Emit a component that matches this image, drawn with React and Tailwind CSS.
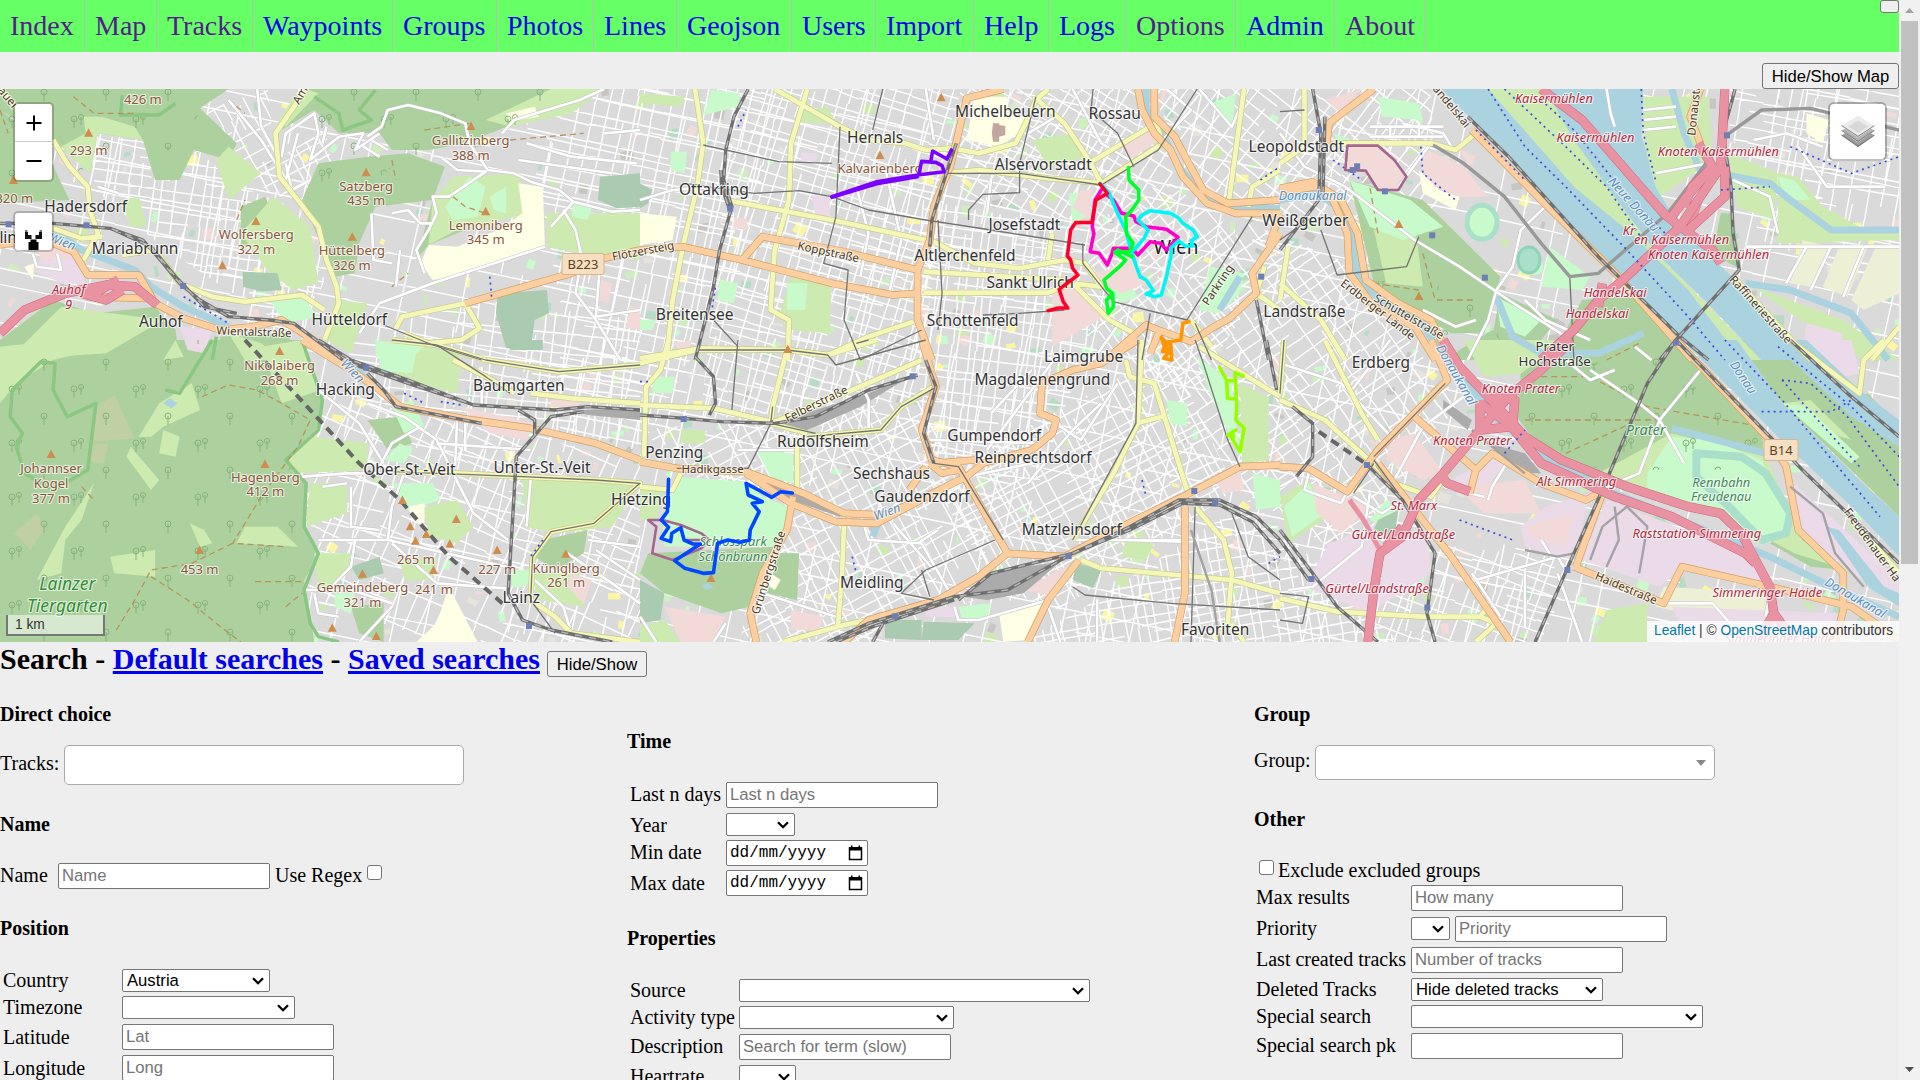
import React from "react";

const NAV = [
  ["Index", 1, "w-[85px]"], ["Map", 1, "w-[72px]"], ["Tracks", 1, "w-[96px]"], ["Waypoints", 0, "w-[140px]"],
  ["Groups", 0, "w-[104px]"], ["Photos", 0, "w-[97px]"], ["Lines", 0, "w-[83px]"], ["Geojson", 0, "w-[115px]"],
  ["Users", 0, "w-[84px]"], ["Import", 0, "w-[98px]"], ["Help", 0, "w-[75px]"], ["Logs", 0, "w-[77px]"],
  ["Options", 1, "w-[110px]"], ["Admin", 0, "w-[99px]"], ["About", 1, "w-[91px]"],
];

/* ---------- Map geometry: six sheets, each drawn in its own 1568 x 1080 grid ---------- */
const SHEETS = [
  { x: 0, y: 0 }, { x: 640, y: 0 }, { x: 1280, y: 0 },
  { x: 0, y: 340 }, { x: 640, y: 340 }, { x: 1280, y: 340 },
];
const KX = 1 / 2.45;
const KY = 1 / 3;

const AREAS = [
  ["#add19e", [
    "M0 267L560 267 490 325 580 430 560 480 475 450 440 540 380 540 350 420 240 400 220 520 150 440 0 330ZM0 330L100 420 170 600 0 610ZM740 267L1420 267 1350 330 1200 400 1140 430 1050 450 960 450 930 400 830 400 770 330 690 390ZM780 490L900 470 1000 460 1090 500 1060 600 920 620 880 730 870 820 820 830 740 600ZM1020 780L1060 600 1120 590 1140 690 1050 735ZM0 1080L0 1020 130 900 230 940 380 920 430 990 440 1080ZM520 1080L540 1010 700 1000 750 1080ZM590 620L650 590 690 700 590 750Z",
    "",
    "M170 540L350 600 540 830 500 1000 420 1000 300 920 230 850ZM400 1080L520 990 640 1080ZM540 880L680 960 600 1080 520 1010ZM1080 640L1110 640 1130 810 1060 760ZM740 900L900 880 980 1030 900 1080 660 1080ZM350 620L420 700 540 830 480 900 340 880Z",
    "M0 0L740 0 790 180 780 260 700 360 750 430 745 560 780 650 745 720 770 906 0 906ZM900 240L980 230 1010 310 950 330ZM1330 600L1440 570 1430 640 1360 690 1310 650ZM860 800L940 790 940 906 880 880Z",
    "M20 640L330 620 270 800 200 820 60 760 0 700ZM340 640L390 640 385 780 310 760Z",
    "M590 100L700 0 970 0 1180 260 1190 400 1110 340 940 400 780 440 640 330 580 230ZM1120 0L1190 0 1517 320 1517 530 1230 190ZM1200 610L1260 540 1380 690 1300 680ZM1380 180L1440 160 1517 260 1517 320Z",
  ]],
  ["#cdebb0", [
    "M205 350L250 350 330 380 350 420 240 400 220 520 150 440 210 400ZM530 480L560 440 640 520 560 600ZM720 290L750 267 780 280 700 380 680 370ZM1190 360L1350 267 1480 267 1400 340 1250 380ZM1340 640L1568 640 1568 780 1430 760 1340 740ZM1060 600L1110 530 1270 520 1300 640 1120 690 1050 735ZM590 700L670 590 760 680 780 850 720 870 660 820ZM300 600L340 590 360 680 320 680ZM20 1080L150 920 400 960 260 1060ZM560 1000L640 1030 690 1080 600 1080ZM820 900L900 910 860 1060 800 1020Z",
    "M370 830L470 840 465 1000 365 990 340 950ZM0 280L110 290 100 320 0 310ZM960 420L1060 400 1100 470 1000 500ZM380 340L460 320 480 370 400 370Z",
    "M510 267L650 267 930 770 1180 1080 1130 1080 1000 870 720 560ZM890 290L1050 290 1060 480 920 600 890 400ZM1100 460L1220 520 1210 660 1120 620ZM1220 520L1270 530 1330 620 1420 680 1517 690 1517 720 1220 730ZM230 690L330 670 350 860 260 850ZM1160 860L1380 960 1517 1080 1430 1080 1250 940Z",
    "M0 20L150 0 230 30 130 60 40 130 0 190ZM470 130L490 210 400 260 370 290 340 290 390 190ZM430 0L450 50 400 60ZM640 20L740 0 785 150 690 190ZM600 560L680 560 730 620 580 610ZM465 550L500 570 520 610 490 620ZM270 650L380 630 380 710 280 700ZM160 560L230 430 200 540 160 600 150 700 90 720ZM770 290L900 310 900 390 720 400 700 360ZM320 320L390 420 370 450 310 350ZM760 430L850 430 850 520 750 560ZM770 640L860 640 850 700 780 760ZM1280 420L1568 430 1500 560 1360 580 1290 560ZM1040 500L1120 480 1160 560 1120 610 1050 590ZM980 660L1070 650 1060 720 990 720ZM1300 700L1420 700 1430 800 1320 780ZM960 0L1130 40 1120 160 960 110ZM400 270L440 290 430 350 390 340Z",
    "M1470 130L1540 170 1540 360 1475 370ZM0 430L60 440 40 540 0 540ZM0 860L60 840 100 906 0 906ZM1190 600L1260 610 1240 660 1180 650ZM100 270L160 270 160 310 100 310Z",
    "M780 400L960 280 1190 350 1280 600 1390 690 1260 640 1080 520 850 450ZM1130 80L1230 190 1300 180 1400 300 1300 260ZM770 906L800 810 900 790 900 906ZM450 0L700 0 590 100 500 110ZM0 470L70 420 130 520 20 610ZM610 0L650 60 590 80Z",
  ]],
  ["#c8facc", [
    "M1405 615L1450 620 1440 660 1400 650ZM1090 620L1150 530 1190 560 1170 650 1110 660ZM1200 590L1240 560 1240 640 1210 630ZM660 900L740 890 780 950 700 970ZM920 1020L1040 1040 1000 1080 920 1070Z",
    "M175 270L245 280 240 320 155 345ZM75 455L115 455 110 520 75 510ZM1050 580L1100 580 1100 650 1060 665ZM360 850L410 850 405 930 360 930ZM195 840L240 850 230 910 190 900ZM1395 800L1480 820 1470 880 1420 940 1370 930ZM1150 870L1200 850 1220 890 1180 910ZM1400 310L1460 280 1450 390ZM0 960L40 960 30 990 0 990Z",
    "M240 290L340 310 350 360 250 350ZM170 540L320 600 400 680 300 720 220 680ZM530 890L640 960 600 1010 540 980ZM130 400L200 430 150 440ZM590 750Q620 720 640 780T590 820ZM660 740L760 830 740 870 640 860ZM1220 530L1260 540 1300 600 1240 600Z",
    "M960 200L1010 180 1040 260 990 280ZM960 430L1060 430 1080 480 1000 510ZM930 20L1020 30 1010 100 930 90ZM1250 690L1300 690 1290 740 1255 740ZM820 760L870 760 860 820 820 800ZM980 310L1010 330 990 370 940 360Z",
    "M90 410L260 425 300 470 365 500 350 580 330 620 60 620 55 530ZM285 330L375 340 375 430 320 410ZM1365 50L1410 90 1450 130 1470 350 1400 170ZM1500 400L1568 420 1568 500 1510 510ZM1290 180L1340 190 1340 260 1300 250ZM30 110L85 110 80 160 30 160ZM780 800L860 790 850 840 790 840Z",
    "M900 400L960 290 1060 300 1180 360 1250 550 1200 610 1100 540 900 460ZM10 500L70 430 110 520 30 590ZM220 540L260 480 290 500 270 570ZM1230 190L1290 200 1420 350 1400 370Z",
  ]],
  ["#aacbaf", [
    "M1470 530L1568 520 1568 620 1510 625 1465 600ZM1220 880L1340 870 1345 940 1310 960 1300 1050 1240 1045 1215 940ZM595 815L680 820 690 870 640 875 595 860Z",
    "M0 550L30 570 20 610 0 625Z", "",
    "M860 680L930 650 940 700 880 720ZM1240 0L1330 0 1330 30 1250 30Z",
    "M0 720L60 760 50 840 0 850ZM600 840L690 840 690 900 600 895ZM695 845L820 850 780 900 690 900ZM1070 670L1130 690 1110 745 1060 720Z",
    "M240 540L290 510 280 600 230 570Z",
  ]],
  ["#ffffe5", [
    "M1050 735L1120 740 1220 690 1280 640 1270 550 1330 560 1335 740 1090 835 1060 840 1030 790ZM1240 340L1310 320 1320 350 1250 365ZM60 800L85 790 80 840Z",
    "M0 640L90 650 80 720 0 735ZM820 290L900 290 900 340 940 350 940 390 880 440 800 420Z",
    "M340 510L390 570 440 590 430 630 350 580ZM1290 340L1345 360 1330 430 1290 400Z",
    "M1100 740L1170 906 1020 906 1070 850ZM1000 500L1040 490 1040 550 1010 540Z",
    "M880 820L1000 780 950 900 890 906ZM320 700L345 720 330 750 305 730Z", "",
  ]],
  ["#eef0d5", ["", "", "M1280 720L1350 740 1300 860 1250 850ZM1370 740L1440 740 1390 890 1330 860ZM1460 740L1517 740 1517 880 1430 930 1400 900Z", "", "", "M940 740L1190 760 1190 870 920 800Z"]],
  ["#c0d0a4", ["", "", "", "M280 165L330 295 225 305 235 200ZM225 310L265 310 255 370 215 365ZM90 520L110 560 75 630 35 580Z", "", ""]],
  ["#ebdbe8", [
    "M100 780L190 770 210 850 160 855 80 810ZM440 980L520 990 500 1060 460 1050Z",
    "M420 585L465 590 465 650 430 650ZM395 458L435 460 430 485 395 485Z",
    "M1290 970L1380 1000 1370 1080 1280 1080Z", "",
    "M700 800L780 800 770 830 700 830Z",
    "M590 560L650 500 760 460 720 660 600 620ZM800 480L1140 640 1200 740 985 680 930 740 740 660ZM1250 420L1517 720 1517 800 1390 690 1280 570ZM420 420L540 340 550 370 500 460 430 450ZM260 620L360 550 370 700 240 800ZM1290 0L1400 0 1420 100 1380 110ZM120 610L230 560 240 640 220 820 60 740ZM960 800L1370 820 1340 906 1000 906Z",
  ]],
  ["#c0a8a0", ["", "M865 370L880 370 880 375 895 378 895 405 880 410 880 425 865 425 862 400Z", "", "", "", ""]],
  ["#f2dad9", [
    "M1470 840L1500 850 1490 910 1465 900ZM1540 920L1568 920 1568 990 1535 985ZM90 740L150 740 190 770 100 780Z",
    "M1010 880L1060 860 1150 940 1010 1040ZM1090 820L1180 880 1240 850 1200 770 1150 810ZM1080 570L1110 570 1100 660 1060 620ZM230 655L262 655 262 690 230 685ZM1180 440L1250 380 1270 420 1200 480ZM80 1030L130 1020 110 1060Z",
    "M170 435L240 437 280 480 310 530 290 570 240 565 210 510 165 510ZM360 450L450 500 510 590 440 590 380 560 345 500ZM110 300L200 267 150 340ZM430 440L480 470 470 500Z",
    "M1130 200L1310 250 1290 300 1200 280ZM1350 180L1420 180 1420 210 1350 200ZM1400 700L1450 720 1430 790 1390 740Z",
    "M60 800L210 830 180 906 100 906ZM1400 410L1470 390 1480 450 1430 460ZM370 810L450 830 440 870 370 870ZM940 750L1040 680 1060 690 1010 770Z",
    "M80 430L220 500 150 580 90 520ZM270 300L330 280 400 400 350 420 260 360ZM600 560L720 520 700 620 620 590ZM430 440L600 420 640 520 500 520ZM150 810L200 800 200 830Z",
  ]],
  ["#aad3df", [
    "", "",
    "M395 267L510 267 720 560 860 700 1000 870 1130 1080 1035 1080 830 820 640 590 560 470ZM650 267L890 267 885 400 920 560 980 680 1090 810 1240 990 1290 1080 1180 1080 1040 900 930 770 820 590 720 420Z",
    "M400 190L415 175 435 190 420 205Z",
    "M150 735L170 730 180 745 160 750Z",
    "M985 0L1120 0 1230 190 1420 420 1517 530 1517 650 1400 500 1220 290ZM1190 0L1290 0 1420 150 1517 240 1517 320 1400 230 1270 80ZM1340 560L1370 570 1480 740 1517 760 1517 800 1440 740Z",
  ]],
  ["#ababab", ["", "", "", "M1400 210L1568 205 1568 240 1440 225Z", "M340 245L560 160 660 110 540 200 400 275ZM790 770L860 695 1030 665 940 760 850 780ZM270 410L400 450 500 515 490 530 370 480Z", "M510 310L600 340 640 400 590 400ZM400 180L470 240 460 270 400 210Z"]],
];

const LINES = {
  water: ["M130 690L200 750 330 810 370 860 450 920 560 980", "M1240 267L1240 330 1280 400 1320 500 1380 590 1450 620 1568 625M1470 830L1420 930", "M0 600L90 580 140 620 180 720 190 830 260 920 350 970 400 1080M960 267L990 400 1030 510 1200 550 1250 600 1350 690 1517 690M1140 850L1250 870 1400 940 1490 1080M530 890L570 1010 640 1060 780 1060 890 1000", "M860 60L900 130", "M570 590L590 530", "M385 0L430 90 520 220 640 350 800 450 1000 550 1200 650 1350 740 1517 830M960 265L1100 310 1190 340"],
  white: [
    "M900 410L935 380 950 330 1000 315 1080 340 1140 370 1150 430 1195 510 1260 520 1300 545 1370 570 1405 605 1500 635 1568 630M1405 605L1350 680M1380 630L1410 690 1425 770 1410 880 1460 960 1520 1080M690 470L700 400 770 340 780 400 760 480 830 410 890 400 870 450 930 400M700 490L715 570 760 540M880 1000L930 910 1060 850 1335 740M1080 470L1120 510 1190 515 1100 590 1060 590 1070 640 1050 690 1020 750 1040 820M730 400L700 540M800 380L790 430M890 440L930 470M910 420L950 450M960 640L1000 630 1030 670 1060 670M910 640L915 780 960 790M980 750L970 860M1290 430L1400 470 1560 490M1230 400L1260 360 1420 300 1480 267M1480 400L1568 390M1270 480L1500 520M240 560L290 580M80 760L90 800 150 810 140 760M630 267L640 380 680 470M560 300L640 420 680 500M1470 790L1460 950 1568 930",
    "M0 600L80 570 190 560M700 267L720 420M1060 267L1130 430 1200 480M1370 267L1450 380 1490 267M1290 267L1350 330 1280 420M530 560L560 700 540 830M600 500L640 720 610 880M860 540L850 640M950 400L1020 350M1180 960L1110 1080M1500 720L1568 760",
    "M0 400L60 500 160 560 330 720 440 800 560 900 700 1010M650 620L590 690 570 800 530 870 510 960 460 1080M300 370L400 400 420 440M370 430L290 560M220 380L400 380M220 410L400 410M270 380L270 410M340 370L340 410M890 330L970 320M890 360L970 350M890 390L970 380M920 520L1050 490M600 900L650 960 760 1020M480 960L430 980 350 930M800 267L810 340 820 380M1110 540L1200 590 1220 700M1160 420L1240 400 1330 440M1270 440L1340 560 1480 560M1340 480L1500 480M1290 740L1240 850M1350 740L1300 870M1430 740L1380 890M1140 740L1517 740",
    "M800 20L940 180M780 150L880 250 940 370M900 190L990 230 1070 300 1110 400 1160 520 1245 600M740 410L850 400 990 400 960 500 950 600 1240 680M960 610L1070 730 1240 745M1120 230L1115 380M1070 310L1300 330M780 600L960 600M1300 420L1290 560M860 440L860 560 930 570M790 440L850 430M820 730L860 680 870 600M750 750L860 750 960 790M880 906L960 800M770 760L780 820 830 830M1310 720L1380 800 1400 880M1390 640L1500 730 1568 790M1460 630L1568 720M1440 600L1568 620M930 380L960 310 1030 260M1180 80L1180 200M1140 240L1140 330",
    "M530 100L560 180 560 270M960 90L860 220M1020 50L850 330M550 560L560 600 690 610 760 760M620 550L720 690M0 830L40 906M300 760L480 830M770 800L780 840 830 840 1000 780M680 610L730 570M1130 190L1060 270 950 430M1170 130L1080 300 1030 260 1020 230M710 300L980 310M1060 600L1330 600M1180 600L1330 605M800 410L1000 360M1000 800L1030 906M1120 780L1120 906M240 330L390 330M210 850L180 906",
    "M0 70L150 130 280 300M270 0L170 160M450 170L350 260 280 420M180 470L250 520 300 480M70 400L60 450 150 490M150 490L165 455M220 460L200 620 80 740 20 750M480 720L680 650 700 690M680 700L740 906M600 700L600 860M640 600L670 660M440 60L330 220M760 90L880 190 930 240 990 370M930 240L1030 90M930 240L880 400 780 450M700 60L760 120 820 90M870 20L910 60M950 790L1060 790 1110 860M1200 760L1190 830M560 360L520 440 510 480M400 440L500 470M470 700L540 830M30 420L0 440",
  ],
  tram: [
    "M940 975L1060 1035 1180 1080",
    "M490 380L480 650 450 790 510 810 500 960 540 1080M110 550L280 580 390 572 470 590 560 630 700 660 860 690 1090 735M155 435L340 485 470 490M745 520L930 520 1130 555 1270 450 1365 267M805 660L805 630 840 583 930 578 930 500M1110 267L1105 330 1170 400 1210 500M1085 730L1085 790 1160 905 1340 960 1500 650M570 390L595 267M690 990L540 1080M840 945L930 940 1040 930M730 660L740 880 730 990M970 290L930 490M1250 940L1230 1080M1360 970L1400 1080M180 960L240 1040",
    "M0 335L60 330M140 825L310 800 340 710M140 825L100 690M0 720L80 650M710 830L720 1080",
    "M960 0L1070 15 1190 60 1370 95 1568 75M1070 15L1190 110 1250 160M960 395L1280 410 1460 420 1568 430 1455 550 1350 575 1305 650 1300 780 1360 880",
    "M240 0L225 210M140 30L360 30 460 45 480 75 700 0M870 600L700 690 640 760 720 780M690 690L710 770M325 240L265 385 90 385M325 200L320 250 430 280M720 145L640 200 590 270 410 290M1220 0L1215 250 1060 600M1360 0L1380 70 1440 300 1470 380M1060 740L1090 765 1300 790 1568 810M720 370L780 380 890 600M560 0L530 10M1360 500L1350 906M1450 520L1490 650 1568 720",
    "M10 0L0 160M0 840L55 850 70 770 0 760M230 360L290 460M405 130L230 350M180 460L230 370",
  ],
  yellow: [
    "M0 270L40 320M130 420L170 500 215 560 220 630 240 700 205 780M750 267L675 400 685 530 780 680 800 780 825 860 830 910 795 1020M130 685L200 715 250 710M300 765L380 750 440 850 520 890 600 905 740 885 795 930M1140 910L985 950 970 985M1140 910L1175 985 1130 1020 1050 1030 990 1000",
    "M135 267L155 430 140 560 105 740 80 900 65 1080M410 267L370 430 365 600 330 750 320 930 365 960 362 1080M330 267L490 380 560 420 650 430 700 450 765 445 830 460 920 430 945 370 970 300 1000 267M965 290L1040 370 1100 480 1130 550 1280 430 1265 370 1100 490M210 600L470 660 720 725 820 790 930 805 1040 780 1090 790 1130 860 1060 850M695 815L1040 840M695 878L1000 878 1060 850 1150 960 1210 1000M1480 267L1440 630M1490 620L1500 560 1568 510M750 520L830 510 1000 535 1130 550M0 1075L150 1045 360 1050 460 1065 560 1010 670 965M1010 700L1000 780M1530 800L1510 880 1568 930M1350 960L1400 1040",
    "M130 430L370 430 430 450 480 400M0 850L100 960 160 1080M1110 830L1200 950 1300 1080M1517 980L1450 1080M0 490L60 440 60 267M20 740L0 900",
    "M960 0L1070 15 1190 60 1370 95 1568 75M1300 160L1400 175 1568 190M960 395L1120 400 1280 410 1460 420 1568 430 1510 490 1455 550 1350 575 1305 650 1300 780 1360 830 1400 880 1568 906M1110 60L1190 110 1260 160",
    "M70 0L50 90 15 140 10 350M0 70L140 30 360 30 460 45 580 0M360 30L325 200 320 250 410 280M320 250L520 150 690 60M720 140L640 200 590 270 410 290M0 195L180 205 320 245M500 550L495 700 485 860 350 906M1190 60L1200 110 1260 130 1290 250 1340 450M1230 0L1220 250 1160 400 1060 600M1360 500L1430 600 1450 700 1440 850M1080 660L1130 685 1450 720 1568 760M385 300L385 440M480 860L560 840M1370 20L1568 170M1215 250L1280 230M780 380L800 410M1450 850L1480 906M100 400L80 450 0 440",
    "M110 0L200 220 240 300M0 180L110 240 200 340 280 430 370 470 415 390M0 775L140 815 350 830 490 830 530 850 480 906M1250 0L1420 160 1430 60 1480 0M1517 700L1390 520M10 0L0 160M490 830L510 800",
  ],
  orange: [
    "M0 735L100 715 180 755 215 825 340 825 380 910 450 955 540 990 620 980 690 960 730 990 840 1080M210 890L360 895M1140 910L1400 820 1480 775 1568 750",
    "M890 267L800 295 780 400 760 500 720 620 710 720 680 810 680 960 715 1080M0 750L105 740 250 780 470 850 620 885 680 880M250 780L300 710 500 755 680 810M1220 267L1230 330 1260 400 1300 450 1330 530 1390 610 1460 640 1568 640M1260 267L1260 350 1310 410 1340 480 1380 570 1440 610 1568 600M1568 700L1500 820 1510 880 1445 955 1400 985 1350 1025 1270 990 1240 975 1160 1060M1270 1000L1250 1060M1568 640L1540 740",
    "M230 267L120 370 115 430M470 390L640 600 830 830 960 1010 1010 1080M0 575L90 560 130 600 165 700 170 820 230 920 330 980 380 1080M0 565L80 545 150 600 190 700 210 840 290 910 370 960 420 1080M1030 267L1005 350 1030 430",
    "M740 0L860 90 930 150 980 200 1130 235 1300 265 1460 310 1568 360",
    "M690 0L725 140 690 270 715 360 780 380 840 510 900 640 830 710 730 780 560 840 500 906M900 640L1040 650 1180 560 1330 470 1470 380 1568 375M0 365L90 385 260 395 400 460 500 520 600 525 700 470 800 410 840 370 960 330 1010 280 1020 240 980 220 985 130 1060 90 1130 70 1220 0M260 400L370 490 480 545 580 550 780 420M375 470L360 570 300 700 270 820 285 906M720 370L820 360M700 380L660 450M710 370L740 400 780 390M1335 500L1335 760 1310 906M1075 660L1000 780 950 906",
    "M370 0L410 120 240 330 165 455 70 385 0 380M240 370L420 650 565 906M320 220L480 390 520 340 640 430 750 480 780 460M480 390L465 460M970 0L1200 300 1240 380 1270 570 1380 700 1380 810 1360 906M720 680L940 790 985 680 1200 740 1400 800 1517 900M790 460L725 680",
  ],
  motor: [
    "M0 1000L60 930 160 880 260 855 330 860 385 915M200 880L260 900 300 870M230 880L290 840", "",
    "M640 267L740 360 940 640 980 680 840 840 780 900 720 990 640 1080M1090 267L1080 500 980 680M1025 430L1060 500 990 600 960 650M1090 500L1090 590 1000 690M1060 500L1010 560 990 620M980 680L1060 750 1080 790M790 850L780 920",
    "", "",
    "M715 0L640 90 560 170 490 270 400 400 340 480 300 590 245 640 230 750 215 906M400 0L440 80 510 170 600 290 690 360 850 440 1000 500 1080 520 1130 580 1200 740 1210 820 1170 906M1210 820L1260 906M560 250L640 370 820 470 960 530 1140 640 1165 670M390 400L410 430 465 455M490 180L490 270 570 260 575 180 520 170M490 190L570 260M300 560L260 620",
  ],
  ramp: ["", "", "M1040 560L1020 640 990 690", "", "", "M170 480L205 540 240 620 260 640"],
  rail: [
    "M0 670L130 670 270 685 350 720 400 790 440 850 490 900 560 950 660 960 720 970 840 1080M280 690L370 740 430 830 500 920 580 940",
    "M265 267L230 350 210 450 205 540 225 620 195 750 180 860 160 960 135 1080M198 510L200 560 220 630M775 430L740 560 715 660 710 740M1510 900L1540 1080",
    "M80 267L100 400 95 600 0 750M110 350L105 600M460 350L560 470 780 770 980 1010 1050 1080M1115 267L1085 400 1105 560 1110 700 1125 810 970 1020 930 1080",
    "M780 0L860 60 1000 120 1160 195 1360 210 1440 200 1568 210M860 70L1000 130 1150 190M900 100L940 150 970 200 1180 250M1430 215L1350 230 1265 350 1245 760 1280 840 1350 870 1500 906M1270 210L1310 240 1310 290",
    "M0 225L110 235 200 245 330 250 430 230 560 150 680 105M780 780L860 700 1060 640 1200 560 1320 480 1420 480 1510 530 1568 600M1060 640L1200 570 1330 490 1420 495 1500 545 1568 640M460 906L560 850 770 770 900 750 1060 640M480 906L570 860 770 780M135 50L180 110 185 190 170 225M570 906L600 840M700 60L725 140 695 280 720 370M1535 0L1560 150",
    "M970 0L900 130 790 450 720 640 625 906M970 0L1280 390 1517 670M30 200L80 250 80 350 40 410M210 370L300 480 380 640 360 820 380 906M0 570L80 700 140 800 240 906M0 600L70 720M1250 0L1390 160 1517 290",
  ],
  siding: ["", "", "", "", "M1350 570L1400 750 1420 906", "M470 270L560 360 600 400M600 630L680 650 720 640M760 660L790 560 850 500 900 560 880 700M820 500L830 600 800 680M1250 440L1330 520 1360 640 1430 740"],
  subway: ["", "", "M375 435L450 490 550 590 640 730 710 830 780 820 950 640 1100 400 1180 330 1300 325 1517 390", "", "", ""],
  tunnel: ["", "", "", "M600 0L730 170 880 370 980 480 1100 650 1240 800", "", "M95 275L215 375"],
  path: [
    "M180 290L230 340 330 340M560 300L600 340M1040 390L1150 370M1110 590L1140 620 1190 640M960 480L970 540M580 660L600 600M1250 420L1430 400M960 860L1000 820M0 330L20 400", "", "M350 760L380 900 480 900M230 850L340 870M240 700L220 560",
    "M495 170L560 135 630 150 690 190 760 240 730 320 640 470 570 610 700 620M570 610L470 670 370 690 330 780 280 880M625 725L740 725M370 710L460 780 540 860 590 906M200 440L230 480M700 800L740 760", "",
    "M600 240L860 240 930 240M640 110L760 110 900 200 1180 260M700 340L860 250M800 60L880 10",
  ],
  green: ["M300 285L295 345 390 345 430 310M770 290L830 340 840 390 910 360 880 330 920 270M520 1080L530 1010", "", "", "M30 150L100 65 135 70 130 150 165 230 235 190 215 390 130 450 60 400 40 320 55 280 25 230ZM520 0L490 60 440 160 405 150M740 0L790 180 780 270 700 360 750 430 745 560 780 640 745 750 760 850 780 890 830 906", "", ""],
  purple: ["", "", "M165 437L240 437 280 480 310 530 290 570 240 570 210 512 160 510Z", "", "M20 540L55 540 100 555 150 580 170 600 150 625 80 660 30 640 40 560ZM110 600L160 600", ""],
  dots: ["M1200 830L1205 900M450 890L560 970", "M240 380L260 330M175 940L185 860M1520 540L1568 500", "M510 267L600 440 700 560 850 750 1000 950 1090 1080M550 267L700 440 800 560 900 740M640 300L720 390 830 560 960 720M885 267L890 400 920 540M480 390L600 540M345 440L350 520 430 600M1080 570L1200 560M1250 440L1400 520 1517 470M130 480L200 540", "M990 160L1040 190M1080 185L1130 195M1330 600L1300 650", "M1230 420L1240 470M520 650L530 700M0 125L20 125M1540 670L1568 650", "M1090 0L1230 180 1380 400 1470 530M1230 120L1300 130 1390 230 1517 440M1180 215L1350 215 1400 180M1220 20L1400 200 1517 350M440 540L570 600M550 340L600 270M1230 120L1420 380"],
};
const LAYERS = [
  ["water", "#aad3df", 7], ["green", "#8ac783", 3.5], ["path", "#b8935a", 1.3, "6 4"],
  ["white", "#c4c2c4", 3.6], ["white", "#ffffff", 2.6],
  ["yellow", "#c9cc8a", 6], ["yellow", "#f4f7b8", 4.6],
  ["orange", "#d3a067", 7.6], ["orange", "#fbcf9f", 6.2],
  ["tram", "#737373", 1.3], ["siding", "#a3a3a3", 2.4], ["subway", "#999999", 3.4], ["tunnel", "#666666", 4, "9 6"],
  ["rail", "#6f6f6f", 3.4], ["rail", "#b8b8b8", 1.4, "7 7"],
  ["ramp", "#e892a2", 5], ["motor", "#cf6880", 9.3], ["motor", "#e892a2", 8.3],
  ["dots", "#3c4be0", 1.7, "2 4"], ["purple", "#a5658c", 2.6],
];

const TRACKS = [
  [1, "#ff00c8", "M1130 570L1115 600 1108 680 1112 700 1103 755 1125 760 1145 795 1155 765 1160 745 1205 745 1220 765 1250 725 1275 730 1290 750 1318 712 1290 688 1240 680 1215 665 1210 648 1180 640 1160 600 1145 585"],
  [1, "#00f5f5", "M1127 550L1150 580 1170 640 1190 690 1205 760 1225 830 1240 840 1258 872 1240 882 1262 890 1277 885 1290 830 1302 760 1300 745 1320 722 1335 738 1355 738 1350 722 1365 710 1355 690 1330 670 1320 655 1300 640 1250 632 1230 645 1220 660 1245 690 1235 715 1210 750"],
  [1, "#ff002b", "M1127 552L1145 580 1117 600 1107 667 1067 668 1055 690 1047 768 1055 780 1060 805 1073 825 1027 868 1037 905 1048 924 1025 924 1000 932"],
  [1, "#00ff2a", "M1197 503L1198 540 1222 570 1222 600 1205 630 1190 650 1192 700 1208 730 1200 755 1163 757 1190 780 1175 800 1137 840 1143 865 1158 880 1160 920 1147 940 1143 900 1158 880M1170 750L1205 770"],
  [1, "#7a00ff", "M470 590L580 545 680 525 745 515 740 497 725 487 690 484 683 524M470 592L580 551 680 530M712 487L717 453 752 477 763 450"],
  [1, "#ff9500", "M1345 965L1330 970 1325 1020 1290 1027 1277 1013 1285 1040 1280 1055 1300 1050 1283 1075 1303 1080 1300 1030 1285 1030 1303 1065"],
  [4, "#95ff00", "M1420 82L1437 120 1440 175 1460 177M1437 122L1460 122M1478 108L1458 98 1462 200 1460 240 1480 265 1470 335 1445 285M1440 285L1460 270M1448 278L1455 290"],
  [4, "#0048ff", "M70 418L67 515 52 540 70 562 52 595 75 605 78 580 100 563 108 600 130 612 148 612 85 662 110 685 155 700 180 698 190 610 215 600 245 607 268 600 270 570 292 515 275 490 300 485 265 465 260 430 323 472 345 455 373 459"],
];

/* labels: [sheet, kind, centre x, baseline y, text, rotation] */
const LABELS = [
  [0, "p", 210, 633, "Hadersdorf"], [0, "p", 331, 759, "Mariabrunn"], [0, "p", 394, 980, "Auhof"], [0, "p", 856, 973, "Hütteldorf"], [0, "p", 20, 726, "lin"],
  [0, "k", 350, 311, "426 m"], [0, "k", 217, 464, "293 m"], [0, "k", 35, 607, "320 m"],
  [0, "k", 1153, 434, "Gallitzinberg"], [0, "k", 1153, 479, "388 m"], [0, "k", 897, 570, "Satzberg"], [0, "k", 897, 614, "435 m"],
  [0, "k", 628, 716, "Wolfersberg"], [0, "k", 628, 760, "322 m"], [0, "k", 862, 764, "Hüttelberg"], [0, "k", 862, 808, "326 m"],
  [0, "k", 1190, 687, "Lemoniberg"], [0, "k", 1190, 731, "345 m"],
  [0, "m", 168, 880, "Auhof"], [0, "m", 168, 925, "9"], [0, "s", 622, 1005, "Wientalstraße", 2], [0, "s", 742, 290, "Am", -60], [0, "s", 15, 300, "auer", 50],
  [0, "w", 150, 735, "Wien", 20], [0, "s", 1577, 762, "Flötzersteig", -11],
  [1, "p", 576, 428, "Hernals"], [1, "k", 588, 516, "Kalvarienberg"], [1, "p", 895, 348, "Michelbeuern"], [1, "p", 1163, 355, "Rossau"],
  [1, "p", 988, 507, "Alservorstadt"], [1, "p", 181, 584, "Ottakring"], [1, "p", 942, 687, "Josefstadt"], [1, "p", 796, 781, "Altlerchenfeld"],
  [1, "p", 956, 862, "Sankt Ulrich"], [1, "p", 134, 957, "Breitensee"], [1, "p", 815, 977, "Schottenfeld"], [1, "p", 1087, 1083, "Laimgrube"],
  [1, "c", 1313, 760, "Wien"], [1, "s", 460, 765, "Koppstraße", 12], [1, "s", 1422, 860, "Parkring", -56],
  [2, "p", 40, 453, "Leopoldstadt"], [2, "p", 62, 675, "Weißgerber"], [2, "p", 60, 948, "Landstraße"], [2, "w", 80, 598, "Donaukanal"],
  [2, "m", 671, 306, "Kaisermühlen"], [2, "m", 773, 425, "Kaisermühlen"], [2, "m", 1074, 467, "Knoten Kaisermühlen"], [2, "m", 855, 702, "Kr"],
  [2, "m", 984, 729, "en Kaisermühlen"], [2, "m", 1050, 775, "Knoten Kaisermühlen"], [2, "m", 821, 888, "Handelskai"], [2, "m", 777, 951, "Handelskai"],
  [2, "w", 860, 620, "Neue Donau", 48], [2, "s", 415, 325, "andelskai", 50], [2, "s", 1022, 330, "Donausta", -84],
  [2, "s", 312, 958, "Schüttelstraße", 30], [2, "s", 235, 936, "Erdberger Lände", 38], [2, "s", 1172, 935, "Raffineriestraße", 48],
  [2, "d", 673, 1050, "Prater"], [2, "d", 673, 1096, "Hochstraße"],
  [3, "p", 846, 162, "Hacking"], [3, "p", 1271, 150, "Baumgarten"], [3, "p", 1003, 404, "Ober-St.-Veit"], [3, "p", 1328, 397, "Unter-St.-Veit"],
  [3, "p", 1277, 786, "Lainz"], [3, "k", 685, 89, "Nikolaiberg"], [3, "k", 685, 133, "268 m"], [3, "k", 125, 398, "Johannser"], [3, "k", 125, 442, "Kogel"], [3, "k", 125, 487, "377 m"],
  [3, "k", 650, 424, "Hagenberg"], [3, "k", 650, 467, "412 m"], [3, "k", 489, 701, "453 m"], [3, "k", 1019, 670, "265 m"], [3, "k", 1218, 699, "227 m"],
  [3, "k", 1387, 698, "Küniglberg"], [3, "k", 1387, 740, "261 m"], [3, "k", 888, 755, "Gemeindeberg"], [3, "k", 1063, 760, "241 m"], [3, "k", 888, 799, "321 m"],
  [3, "f", 165, 747, "Lainzer"], [3, "f", 165, 813, "Tiergarten"], [3, "w", 858, 100, "Wien", 46],
  [4, "p", 3, 494, "Hietzing"], [4, "p", 84, 351, "Penzing"], [4, "p", 448, 319, "Rudolfsheim"], [4, "p", 986, 132, "Magdalenengrund"], [4, "p", 868, 301, "Gumpendorf"],
  [4, "p", 963, 368, "Reinprechtsdorf"], [4, "p", 616, 416, "Sechshaus"], [4, "p", 691, 485, "Gaudenzdorf"], [4, "p", 1058, 584, "Matzleinsdorf"],
  [4, "p", 568, 742, "Meidling"], [4, "p", 1409, 882, "Favoriten"], [4, "s", 178, 396, "Hadikgasse"], [4, "s", 435, 200, "Felberstraße", -26], [4, "s", 322, 700, "Grünbergstraße", -72],
  [4, "g", 228, 616, "Schlosspark"], [4, "g", 228, 661, "Schönbrunn"], [4, "w", 608, 525, "Wien", -20],
  [5, "p", 247, 82, "Erdberg"], [5, "m", 590, 158, "Knoten Prater"], [5, "m", 471, 313, "Knoten Prater"], [5, "m", 726, 436, "Alt Simmering"], [5, "m", 328, 508, "St. Marx"],
  [5, "m", 302, 594, "Gürtel/Landstraße"], [5, "m", 238, 757, "Gürtel/Landstraße"], [5, "m", 1021, 593, "Raststation Simmering"], [5, "m", 1194, 768, "Simmeringer Haide"],
  [5, "m", 1224, 906, "Simmeringer Haide"], [5, "g", 1081, 438, "Rennbahn"], [5, "g", 1081, 482, "Freudenau"], [5, "G", 896, 284, "Prater"],
  [5, "w", 1128, 118, "Donau", 56], [5, "w", 425, 110, "Donaukanal", 60], [5, "w", 1405, 782, "Donaukanal", 30], [5, "s", 845, 753, "Haidestraße", 23], [5, "s", 1445, 620, "Freudenauer Ha", 54],
];
const KINDS = {
  p: [15.5, "#333333", "normal"], d: [13.3, "#333333", "normal"], c: [19, "#222222", "normal"], k: [13, "#8a5738", "normal"], m: [12.8, "#b02a40", "italic"],
  s: [11.5, "#4a3a22", "normal"], w: [12.5, "#5a8fc0", "italic"], g: [12.8, "#3f8a58", "italic"], G: [14.5, "#3f8a58", "italic"], f: [17.5, "#2d8f32", "italic"],
};

const PEAKS = [
  [0, 217, 398], [0, 33, 540], [0, 1154, 378], [0, 897, 517], [0, 627, 663], [0, 545, 796], [0, 863, 710], [0, 1190, 634], [0, 685, 1053],
  [1, 738, 292], [1, 588, 465], [1, 362, 1047], [2, 291, 672], [2, 340, 888],
  [3, 125, 342], [3, 649, 372], [3, 489, 630], [3, 986, 480], [3, 1118, 537], [3, 1005, 559], [3, 1044, 582], [3, 1018, 602], [3, 1102, 611],
  [3, 1218, 630], [3, 1386, 641], [3, 1062, 690], [3, 888, 701], [3, 814, 863], [3, 922, 888], [4, 174, 714],
];
const STATIONS = [[0, 21, 673], [0, 212, 676], [0, 449, 858], [1, 221, 626], [1, 1522, 830], [2, 95, 390], [2, 189, 499], [2, 178, 510], [2, 257, 574], [2, 373, 706], [2, 502, 833], [2, 1095, 406], [2, 970, 1028],
  [3, 897, 83], [3, 1296, 858], [4, 107, 237], [4, 668, 109], [4, 625, 829], [4, 1409, 487], [4, 1358, 453], [4, 1050, 648], [5, 213, 375], [5, 77, 717], [5, 361, 803], [5, 704, 690]];

const DISTRICTS = [
  ["0,89 1899,89 1899,642 0,642", 12, 24, 0.35],
  ["90,135 145,140 152,180 198,150 235,185 275,200 325,280 300,335 220,285 160,245 95,190", 8, 10, 0.15],
  ["205,110 268,89 275,160 325,130 335,180 310,190 290,200 262,190 235,150", 62, 10, 0.15],
  ["330,335 480,300 640,320 640,445 400,405", 6, 13, 0.2],
  ["310,390 400,410 640,460 640,642 440,642 310,600 300,500", 24, 14, 0.2],
  ["520,89 730,89 735,240 690,360 640,450 560,440 560,300", 12, 12, 0.15],
  ["730,89 960,89 930,300 915,400 700,420 720,240", 17, 10, 0.12],
  ["922,200 1090,230 1090,335 1040,480 925,470 915,340", 7, 10, 0.12],
  ["640,430 925,400 1000,590 870,642 740,642 760,530", -28, 11, 0.12],
  ["960,89 1150,89 1180,200 1100,225 960,200", 32, 11, 0.12],
  ["1090,225 1165,180 1235,230 1240,320 1190,395 1085,335", 52, 9, 0.2],
  ["1150,89 1430,89 1440,220 1300,220 1200,190", 38, 12, 0.15],
  ["1240,220 1340,260 1460,400 1350,560 1240,490 1190,400", 55, 11, 0.15],
  ["930,480 1170,350 1235,490 1060,610 1000,590", 62, 9, 0.12],
  ["1020,642 1080,610 1250,500 1400,642", 80, 10, 0.12],
  ["1390,540 1580,560 1540,642 1370,642", 20, 12, 0.15],
  ["1720,89 1899,89 1899,290 1760,240", 10, 13, 0.2],
];

function makeRandom(seed) {
  let s = seed;
  return () => {
    s = (s * 1664525 + 1013904223) % 4294967296;
    return s / 4294967296;
  };
}

function streetPath(points, angle, step, skip, seed) {
  const rnd = makeRandom(seed);
  const pts = points.split(" ").map((p) => p.split(",").map(Number));
  const xs = pts.map((p) => p[0]);
  const ys = pts.map((p) => p[1]);
  const cx = (Math.min(...xs) + Math.max(...xs)) / 2;
  const cy = (Math.min(...ys) + Math.max(...ys)) / 2;
  const r = Math.hypot(Math.max(...xs) - cx, Math.max(...ys) - cy);
  const a = (angle * Math.PI) / 180;
  const at = (u, v) => `${(cx + u * Math.cos(a) - v * Math.sin(a)).toFixed(1)} ${(cy + u * Math.sin(a) + v * Math.cos(a)).toFixed(1)}`;
  let d = "";
  for (const flip of [false, true]) {
    for (let v = -r; v < r; v += step * (0.65 + rnd() * 0.9)) {
      for (let u = -r; u < r; ) {
        const len = step * (2 + rnd() * 5);
        if (rnd() > skip) d += flip ? `M${at(v, u)}L${at(v + (rnd() - 0.5) * 3, u + len)}` : `M${at(u, v)}L${at(u + len, v + (rnd() - 0.5) * 3)}`;
        u += len;
      }
    }
  }
  return d;
}

const spots = (() => {
  const rnd = makeRandom(77);
  const fills = ["#cfeec0", "#c8facc", "#f2dad9", "#fbf6a6", "#c8c6c0", "#b6dcc6", "#cdebb0", "#e6e2dc"];
  return Array.from({ length: 900 }, () => {
    const w = 3 + rnd() * 10;
    return { x: rnd() * 1899, y: 89 + rnd() * 553, w, h: 3 + rnd() * 8, a: rnd() * 60 - 20, f: fills[Math.floor(rnd() * fills.length)] };
  });
})();

function MapCanvas() {
  const at = (s) => `translate(${SHEETS[s].x} ${SHEETS[s].y}) scale(${KX} ${KY})`;
  const px = (s, x) => SHEETS[s].x + x * KX;
  const py = (s, y) => SHEETS[s].y + y * KY;
  return (
    <svg viewBox="0 89 1899 553" className="block h-[553px] w-[1899px]" fontFamily='"Noto Sans", "Open Sans", sans-serif'>
      <defs>
        <pattern id="trees" width="62" height="54" patternUnits="userSpaceOnUse">
          <g fill="none" stroke="#86b37c" strokeWidth="1">
            <circle cx="12" cy="11" r="3" /><path d="M12 11v9" /><circle cx="19" cy="9" r="2.5" /><path d="M19 9v8" />
            <circle cx="44" cy="38" r="3" /><path d="M44 38v9" />
          </g>
        </pattern>
        <clipPath id="woods"><path d="M0 89H220L170 150 80 170 0 200ZM300 89H560L520 140 400 160 330 220ZM0 350L200 340 320 400 285 480 310 580 320 642H0ZM1520 380L1650 350 1760 440 1720 470 1600 470 1520 430ZM1370 280L1480 290 1500 340 1400 330Z" /></clipPath>
        {DISTRICTS.map((d, i) => <clipPath id={`district-${i}`} key={i}><polygon points={d[0]} /></clipPath>)}
      </defs>
      <rect x="0" y="89" width="1899" height="553" fill="#dbdadb" />
      {spots.map((s, i) => <rect key={i} x={s.x} y={s.y} width={s.w} height={s.h} fill={s.f} transform={`rotate(${s.a} ${s.x} ${s.y})`} />)}
      {DISTRICTS.map((d, i) => (
        <g key={i} clipPath={`url(#district-${i})`}>
          <path d={streetPath(d[0], d[1], d[2], d[3], 11 + i * 7)} fill="none" stroke="#fff" strokeWidth={1.4} />
        </g>
      ))}
      {AREAS.map(([fill, paths], k) => paths.map((d, s) => d && <path key={`${k}-${s}`} d={d} fill={fill} transform={at(s)} />))}
      <rect x="0" y="89" width="1899" height="553" fill="url(#trees)" clipPath="url(#woods)" />
      <path d="M1020 340L1130 350 1190 400 1250 520 1240 580 1180 600 1100 500 1020 410Z" transform={at(5)} fill="none" stroke="#aae0cb" strokeWidth="8" vectorEffect="non-scaling-stroke" strokeLinejoin="round" />
      <ellipse cx={px(2, 495)} cy={py(2, 667)} rx="15" ry="17" fill="#c8facc" stroke="#aae0cb" strokeWidth="5" />
      <ellipse cx={px(2, 610)} cy={py(2, 780)} rx="11" ry="13" fill="#aae0cb" stroke="#8fd4b8" strokeWidth="3" />
      {LAYERS.map(([name, color, width, dash], k) =>
        LINES[name].map((d, s) => d && (
          <path key={`${k}-${s}`} d={d} transform={at(s)} fill="none" stroke={color} strokeWidth={width} strokeDasharray={dash} strokeLinejoin="round" vectorEffect="non-scaling-stroke" />
        ))
      )}
      {PEAKS.map(([s, x, y], i) => <path key={i} d={`M${px(s, x)} ${py(s, y) - 4.5}l4.5 8.5h-9z`} fill="#cf8c4f" />)}
      {STATIONS.map(([s, x, y], i) => <rect key={i} x={px(s, x) - 3} y={py(s, y) - 3} width="6" height="6" fill="#6d7fb5" />)}
      {LABELS.map(([s, kind, x, y, text, turn], i) => {
        const [size, fill, style] = KINDS[kind];
        return (
          <text key={i} x={px(s, x)} y={py(s, y) + 0.8} fontSize={size} fill={fill} fontStyle={style} textAnchor="middle" stroke="#ffffff" strokeOpacity="0.7" strokeWidth="2.2" paintOrder="stroke" strokeLinejoin="round" transform={turn ? `rotate(${turn} ${px(s, x)} ${py(s, y)})` : undefined}>
            {text}
          </text>
        );
      })}
      {[[583, 264, 42, "B223"], [1781, 450, 34, "B14"]].map(([x, y, w, t]) => (
        <g key={t}>
          <rect x={x - w / 2} y={y - 10.5} width={w} height="21" rx="2" fill="#f7dfc4" stroke="#d9b48a" />
          <text x={x} y={y + 5} fontSize="13" fill="#5a4120" textAnchor="middle">{t}</text>
        </g>
      ))}
      {TRACKS.map(([s, color, d]) => (
        <path key={color} d={d} transform={at(s)} fill="none" stroke={color} strokeWidth="3.6" strokeLinecap="round" strokeLinejoin="round" vectorEffect="non-scaling-stroke" />
      ))}
    </svg>
  );
}

function LeafletMap() {
  return (
    <section className="relative h-[553px] w-[1899px] shrink-0 overflow-hidden font-['Liberation_Sans',Arial,sans-serif]">
      <MapCanvas />
      <div className="absolute top-[13px] left-[13px] flex w-[41px] flex-col rounded-[5px] border-2 border-black/20 bg-white bg-clip-padding">
        <span className="flex h-[38px] items-center justify-center border-b border-[#ccc] pt-px pl-px">
          <svg className="size-4" viewBox="0 0 16 16"><path d="M8 0.500v15M0.500 8h15" stroke="#000" strokeWidth="2" /></svg>
        </span>
        <span className="flex h-[38px] items-center justify-center pl-px">
          <svg className="size-4" viewBox="0 0 16 16"><path d="M0.500 8h15" stroke="#000" strokeWidth="2" /></svg>
        </span>
      </div>
      <div className="absolute top-[122px] left-[13px] h-[41px] w-[41px] overflow-hidden rounded-[5px] border-2 border-black/20 bg-white bg-clip-padding">
        <svg className="block h-[37px] w-[37px]" viewBox="15 213 37 37">
          <path d="M25 230h2.500v9H25zM39.500 230H42v9h-2.500z" fill="#777" />
          <path d="M25 232h3v3h5v4h-8zM42 232h-3v3h-5v4h8z" fill="#111" />
          <path d="M28.500 230h3.500v4h-3.500zM35 230h3.500v4H35zM31.500 234h4v5h-4z" fill="#fff" />
          <path d="M28.500 242h2v-2.500h6v2.500h2v8h-10z" fill="#000" />
        </svg>
      </div>
      <div className="absolute top-[13px] left-[1828px] flex h-[59px] w-[59px] items-center justify-center rounded-[6px] border-2 border-black/25 bg-white bg-clip-padding">
        <svg className="h-[33px] w-[34px]" viewBox="0 0 34 33">
          <path d="M0.500 20.500L17 32 33.500 20.500 30 18.200 17 27.500 4 18.200Z" fill="#9c9c9c" />
          <path d="M0.500 20.500L17 32 33.500 20.500 33.500 19.500 17 30.800 0.500 19.500Z" fill="#777777" />
          <path d="M0.500 15.800L17 27 33.500 15.800 30 13.500 17 22.500 4 13.500Z" fill="#b4b4b4" />
          <path d="M0.500 15.800L17 27 33.500 15.800 33.500 14.800 17 25.800 0.500 14.800Z" fill="#808080" />
          <path d="M0.500 11L17 0.500 33.500 11 17 22Z" fill="#ececec" />
          <path d="M7 11.500L17 5.500 27 11.500 17 18Z" fill="#d8d8d8" />
          <path d="M0.500 11L17 22 33.500 11 33.500 10 17 20.800 0.500 10Z" fill="#8a8a8a" />
        </svg>
      </div>
      <div className="absolute top-[526px] left-[6px] h-[21px] w-[99px] border-2 border-t-0 border-[#777] bg-white/50 pt-px pl-[7px] text-[13.75px] leading-[17px] text-[#333]">1 km</div>
      <div className="absolute top-[532px] left-[1647px] h-[21px] w-[252px] bg-white/80 pt-px pl-[7px] text-[13.75px] leading-[18px] whitespace-nowrap text-[#333]">
        <a className="text-[#0078a8]">Leaflet</a> | © <a className="text-[#0078a8]">OpenStreetMap</a> contributors
      </div>
    </section>
  );
}

const Sans = "font-['Liberation_Sans',Arial,sans-serif] text-[16.67px]";

function Field({ placeholder, size = "w-[212px]" }) {
  return <input placeholder={placeholder} className={`block h-[26px] shrink-0 rounded-[2px] border border-[#767676] bg-white px-[3px] pb-px leading-[19px] text-black placeholder:text-[#757575] ${Sans} ${size}`} />;
}

function Select({ value, size }) {
  return (
    <span className={`flex h-[23px] shrink-0 items-center justify-between rounded-[2px] border border-[#767676] bg-white pr-[5px] pl-[4px] leading-[19px] ${Sans} ${size}`}>
      <span>{value}</span>
      <svg className="h-[8px] w-[12px] shrink-0" viewBox="0 0 12 8"><path d="M1 1.200L6 6.200 11 1.200" fill="none" stroke="#000" strokeWidth="2.300" /></svg>
    </span>
  );
}

function DateField() {
  return (
    <span className="flex h-[26px] w-[142px] shrink-0 items-center justify-between rounded-[2px] border border-[#767676] bg-white pr-[4px] pl-[3px] font-['Liberation_Mono',monospace] text-[16px]">
      <span className="pt-px">dd/mm/yyyy</span>
      <svg className="h-[16px] w-[15px]" viewBox="0 0 15 16"><path d="M1.500 3h12v11.500h-12z" fill="none" stroke="#000" strokeWidth="1.500" /><path d="M1 2h13v3.500H1zM3 0.500h1.500v2H3zM10.500 0.500H12v2h-1.500z" /></svg>
    </span>
  );
}

function Box() {
  return <span className="block h-[15px] w-[15px] shrink-0 rounded-[3px] border border-[#767676] bg-white" />;
}

function Row({ label, h, w, pad = "pt-px", children }) {
  return (
    <div className={`flex items-start ${h}`}>
      <span className={`shrink-0 whitespace-nowrap ${w} ${pad}`}>{label}</span>
      {children}
    </div>
  );
}

function Heading({ children, gap }) {
  return <h4 className={`h-[23px] font-bold ${gap}`}>{children}</h4>;
}

function Button({ children, size }) {
  return <button className={`block h-[26px] shrink-0 rounded-[3px] border border-[#767676] bg-[#efefef] text-center leading-[23px] font-normal whitespace-nowrap text-black ${Sans} ${size}`}>{children}</button>;
}

export default function App() {
  return (
    <div className="flex h-[1080px] w-[1920px] overflow-hidden bg-[#eeeeee] font-['Liberation_Serif','Times_New_Roman',serif] text-[20px] leading-[23px] text-black">
      <main className="flex w-[1899px] shrink-0 flex-col overflow-hidden">
        <nav className="flex h-[52px] shrink-0 bg-[#66ff66] text-[28px] leading-[52px]">
          {NAV.map(([name, visited, width]) => (
            <a key={name} className={`shrink-0 border-r border-[#bbbbbb] pl-[10px] ${width} ${visited ? "text-[#551a8b]" : "text-[#0000ee]"}`}>{name}</a>
          ))}
          <button className="ml-auto h-[13px] w-[19px] rounded-[3px] border border-[#767676] bg-[#efefef]" />
        </nav>
        <div className="flex h-[37px] shrink-0 items-end justify-end">
          <Button size="w-[137px]">Hide/Show Map</Button>
        </div>
        <LeafletMap />
        <div className="flex h-[61px] shrink-0 items-start">
          <h2 className="h-[34px] text-[30px] leading-[34px] font-bold whitespace-pre">
            Search - <a className="text-[#0000ee] underline">Default searches</a> - <a className="text-[#0000ee] underline">Saved searches</a>
          </h2>
          <div className="pt-[9px] pl-[7px]"><Button size="w-[100px]">Hide/Show</Button></div>
        </div>
        <div className="flex h-[377px] shrink-0">
          <section className="w-[627px] shrink-0">
            <Heading gap="mt-0">Direct choice</Heading>
            <div className="mt-[19px] flex h-[40px] items-start">
              <span className="w-[64px] pt-[7px]">Tracks:</span>
              <span className="h-[40px] w-[400px] rounded-[5px] border border-[#aaa] bg-white" />
            </div>
            <Heading gap="mt-[28px]">Name</Heading>
            <div className="mt-[27px] flex h-[27px] items-start">
              <span className="w-[58px] pt-px">Name</span>
              <Field placeholder="Name" />
              <span className="w-[92px] shrink-0 pt-px pl-[5px] whitespace-nowrap">Use Regex</span>
              <span className="pt-[2px] pl-[5px]"><Box /></span>
            </div>
            <Heading gap="mt-[27px]">Position</Heading>
            <div className="mt-[29px] pl-[3px]">
              <Row label="Country" h="h-[27px]" w="w-[119px]" pad="pt-0"><Select value="Austria" size="w-[148px]" /></Row>
              <Row label="Timezone" h="h-[28px]" w="w-[119px]" pad="pt-0"><Select size="w-[173px]" /></Row>
              <Row label="Latitude" h="h-[31px]" w="w-[119px]" pad="pt-[2px]"><Field placeholder="Lat" /></Row>
              <Row label="Longitude" h="h-[31px]" w="w-[119px]" pad="pt-[2px]"><Field placeholder="Long" /></Row>
            </div>
          </section>
          <section className="w-[627px] shrink-0 pt-[27px]">
            <Heading gap="mt-0">Time</Heading>
            <div className="mt-[29px] pl-[3px]">
              <Row label="Last n days" h="h-[31px]" w="w-[96px]"><Field placeholder="Last n days" /></Row>
              <Row label="Year" h="h-[27px]" w="w-[96px]"><Select size="w-[69px]" /></Row>
              <Row label="Min date" h="h-[30px]" w="w-[96px]"><DateField /></Row>
              <Row label="Max date" h="h-[30px]" w="w-[96px]" pad="pt-[2px]"><DateField /></Row>
            </div>
            <Heading gap="mt-[27px]">Properties</Heading>
            <div className="mt-[29px] pl-[3px]">
              <Row label="Source" h="h-[27px]" w="w-[109px]" pad="pt-0"><Select size="w-[351px]" /></Row>
              <Row label="Activity type" h="h-[28px]" w="w-[109px]" pad="pt-0"><Select size="w-[215px]" /></Row>
              <Row label="Description" h="h-[31px]" w="w-[109px]"><Field placeholder="Search for term (slow)" /></Row>
              <Row label="Heartrate" h="h-[27px]" w="w-[109px]" pad="pt-0"><Select size="w-[57px]" /></Row>
            </div>
          </section>
          <section className="w-[640px] shrink-0">
            <Heading gap="mt-0">Group</Heading>
            <div className="mt-[19px] flex h-[35px] items-start">
              <span className="w-[61px] pt-[4px]">Group:</span>
              <span className="flex h-[35px] w-[400px] items-center justify-end rounded-[5px] border border-[#aaa] bg-white pr-[8px]">
                <svg className="h-[6px] w-[10px]" viewBox="0 0 10 6"><path d="M0 0h10L5 6z" fill="#888" /></svg>
              </span>
            </div>
            <Heading gap="mt-[28px]">Other</Heading>
            <div className="mt-[27px] pl-[2px]">
              <div className="flex h-[27px] items-start pl-[3px]">
                <span className="pt-[2px]"><Box /></span><span className="pt-px pl-[4px]">Exclude excluded groups</span>
              </div>
              <Row label="Max results" h="h-[31px]" w="w-[155px]"><Field placeholder="How many" /></Row>
              <Row label="Priority" h="h-[31px]" w="w-[155px]">
                <span className="pt-px pr-[5px]"><Select size="w-[39px]" /></span><Field placeholder="Priority" />
              </Row>
              <Row label="Last created tracks" h="h-[31px]" w="w-[155px]"><Field placeholder="Number of tracks" /></Row>
              <Row label="Deleted Tracks" h="h-[27px]" w="w-[155px]" pad="pt-0"><Select value="Hide deleted tracks" size="w-[192px]" /></Row>
              <Row label="Special search" h="h-[28px]" w="w-[155px]" pad="pt-0"><Select size="w-[292px]" /></Row>
              <Row label="Special search pk" h="h-[27px]" w="w-[155px]"><Field size="w-[212px]" /></Row>
            </div>
          </section>
        </div>
      </main>
      <aside className="flex w-[21px] shrink-0 flex-col items-center bg-[#f1f1f1]">
        <span className="flex h-[21px] items-center"><svg className="h-[5px] w-[9px]" viewBox="0 0 9 5"><path d="M0 5h9L4.500 0z" fill="#a3a3a3" /></svg></span>
        <span className="h-[543px] w-[17px] bg-[#c1c1c1]" />
        <span className="mt-auto flex h-[21px] items-center"><svg className="h-[5px] w-[9px]" viewBox="0 0 9 5"><path d="M0 0h9L4.500 5z" fill="#505050" /></svg></span>
      </aside>
    </div>
  );
}
